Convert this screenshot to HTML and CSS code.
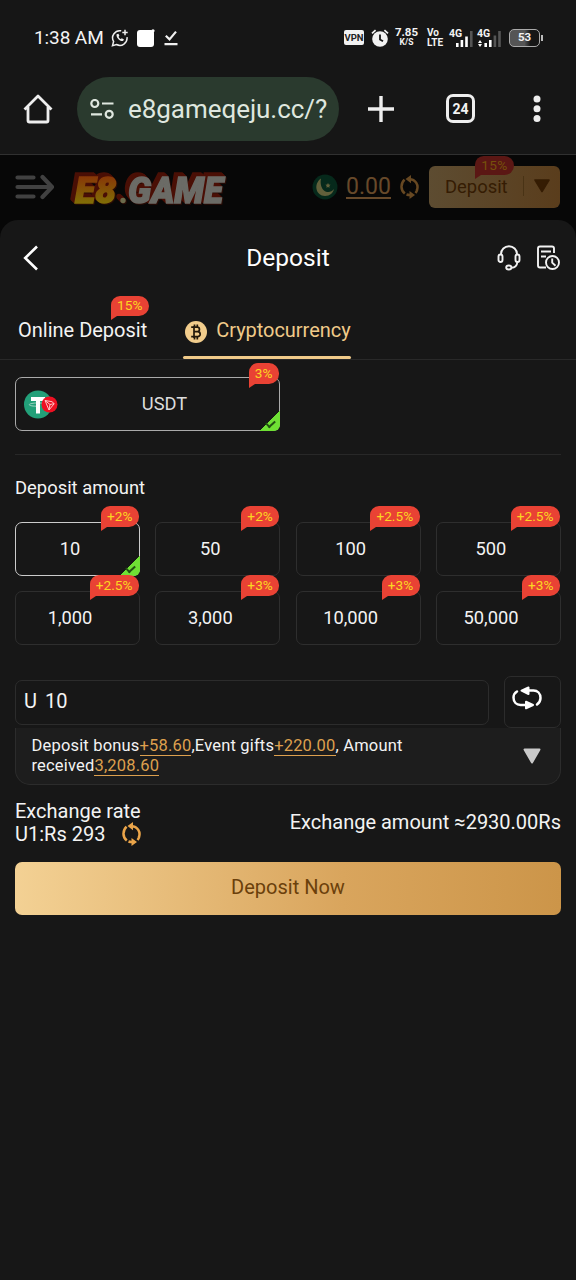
FILE: index.html
```html
<!DOCTYPE html>
<html lang="en">
<head>
<meta charset="utf-8">
<title>Deposit</title>
<link rel="stylesheet" href="styles.css">
</head>
<body>
<div class="status">
  <span class="clock">1:38 AM</span>
  <svg class="st-wa" width="18" height="18" viewBox="0 0 18 18" fill="none" stroke="#eee" stroke-width="1.5"><path d="M10.2 1.8A7.2 7.2 0 0 0 2.6 12.5L1.5 16.6l4-1.1A7.2 7.2 0 0 0 16 8.2"/><path d="M14 .8v5.4M11.3 3.5h5.4"/><path d="M5.6 5.2c-.8 3 3.2 7.4 6.4 6.8l1-1.6-2.2-1.2-1 .9c-1-.4-1.8-1.3-2.2-2.3l.8-1-1-2z" fill="#eee" stroke="none"/></svg>
  <svg class="st-sq" width="18" height="18" viewBox="0 0 18 18"><rect x="0" y="1" width="17" height="17" rx="3" fill="#fff"/><circle cx="16" cy="1.8" r="1.6" fill="#fff"/></svg>
  <svg class="st-chk" width="14" height="16" viewBox="0 0 14 16" fill="none" stroke="#f0f0f0" stroke-width="2.2"><path d="M1.8 5.8l3.7 3.6L12 1.6M.5 14.2h13"/></svg>
  <span class="grow"></span>
  <span class="vpn">VPN</span>
  <svg class="st-alarm" width="18" height="18" viewBox="0 0 18 18"><circle cx="9" cy="10" r="7.8" fill="#f2f2f2"/><path d="M1 4.400L4.600 1.200M17 4.400L13.400 1.200" stroke="#f2f2f2" stroke-width="1.800"/><path d="M9 5.600v4.800l3 1.800" fill="none" stroke="#161616" stroke-width="1.800"/></svg>
  <span class="stack speed"><b>7.85</b><i>K/S</i></span>
  <span class="stack volte"><b>Vo</b><b>LTE</b></span>
  <span class="signal"><b>4G</b><svg width="17" height="16" viewBox="0 0 17 16"><path d="M0 12h2.600v4H0zM4.600 9h2.600v7H4.600zM9.200 5.500h2.600v10.500H9.200z" fill="#fff"/><path d="M14 0h2.600v16H14z" fill="#555"/></svg></span>
  <span class="signal second"><b>4G</b><svg width="23" height="16" viewBox="0 0 23 16"><path d="M0 12L2 9l2 3zM0 13l2 3 2-3zM6.400 12H9v4H6.400zM11 9h2.600v7H11z" fill="#fff"/><path d="M15.600 4.500h2.600V16h-2.600zM20.200 0h2.600v16h-2.600z" fill="#555"/></svg></span>
  <span class="battery">53</span>
</div>
<div class="browser">
  <svg class="home" width="30" height="30" viewBox="0 0 30 30" fill="none" stroke="#eee" stroke-width="2.800" stroke-linejoin="round"><path d="M1.500 15.500L15 2l13.500 13.500M5 13v13.500q0 1.500 1.500 1.500h17q1.500 0 1.500-1.500V13"/></svg>
  <div class="url">
    <svg width="25" height="20" viewBox="0 0 25 20" fill="none" stroke="#dfe7df" stroke-width="2.200"><circle cx="4.800" cy="4.500" r="3.500"/><path d="M12 4.500h11.500M1 15.300h11"/><circle cx="19.200" cy="15.300" r="3.500"/></svg>
    <span>e8gameqeju.cc/?</span>
  </div>
  <svg class="plus" width="26" height="26" viewBox="0 0 26 26" stroke="#eee" stroke-width="3.400"><path d="M13 0v26M0 13h26"/></svg>
  <span class="tabcount">24</span>
  <svg class="dots" width="8" height="28" viewBox="0 0 8 28" fill="#eee"><circle cx="4" cy="4" r="3.500"/><circle cx="4" cy="13.800" r="3.500"/><circle cx="4" cy="23.600" r="3.500"/></svg>
</div>
<header class="site">
  <svg class="menu" width="39" height="26" viewBox="0 0 39 26" fill="none" stroke="#414141" stroke-width="4.200" stroke-linecap="round" stroke-linejoin="round"><path d="M2.500 3.500h16M2.500 13h34M2.500 22.500h16M27.500 3l9.500 10-9.500 10"/></svg>
  <svg class="logo" width="160" height="38" viewBox="0 0 160 38">
    <defs><linearGradient id="fire" x1="0" y1="0" x2="0" y2="1"><stop offset=".2" stop-color="#873807"/><stop offset=".85" stop-color="#807106"/></linearGradient></defs>
    <text class="logo-e8" x="7" y="34.500" textLength="41" lengthAdjust="spacingAndGlyphs">E8</text><circle cx="55" cy="32.500" r="2.700" fill="#6b6b4c"/><text class="logo-game" x="60" y="34.500" textLength="95" lengthAdjust="spacingAndGlyphs">GAME</text>
  </svg>
  <span class="grow"></span>
  <svg class="flag" width="26" height="26" viewBox="0 0 26 26"><circle cx="13" cy="13" r="12.500" fill="#06291b"/><path d="M9 4.500C1 10 4 22 13 22c5 0 8-3 9-7-2.500 3.500-7 4-10 1.500S8 9 9 4.500z" fill="#62603b"/><path d="M16 9l.8 1.600 1.800.2-1.300 1.200.3 1.800-1.600-.8-1.600.8.3-1.800-1.300-1.200 1.800-.2z" fill="#62603b"/></svg>
  <span class="balance">0.00</span>
  <svg class="sync" width="20" height="24" viewBox="0 0 20 24"><use href="#sync-shape" color="#674822"/></svg>
  <div class="mini-deposit"><span>Deposit</span><i></i><svg width="18" height="14" viewBox="0 0 18 14"><path d="M2 1h14L9 12.500z" fill="#351c03" stroke="#351c03" stroke-width="1.600" stroke-linejoin="round"/></svg><em class="badge dim">15%</em></div>
</header>
<main class="sheet">
  <div class="sheet-head">
    <svg width="16" height="26" viewBox="0 0 16 26" fill="none" stroke="#fff" stroke-width="2.600"><path d="M15 1.500L3.200 13 15 24.500"/></svg>
    <h1>Deposit</h1>
    <div class="head-icons">
      <svg width="24" height="26" viewBox="0 0 24 26" fill="none" stroke="#f2f2f2" stroke-width="1.900"><path d="M4 10V9a8 7.800 0 0 1 16 0v1M20.500 16.500c-.5 4.500-3 6.300-6 6.300"/><rect x="1.500" y="9.500" width="4" height="7.500" rx="2"/><rect x="18.500" y="9.500" width="4" height="7.500" rx="2"/><ellipse cx="11.800" cy="22.500" rx="2.600" ry="2"/></svg>
      <svg width="24" height="26" viewBox="0 0 24 26" fill="none" stroke="#f2f2f2" stroke-width="1.900"><path d="M18 8V3.500Q18 1.500 16 1.500H4Q2 1.500 2 3.500v17q0 2 2 2h6M5 6.500h10M5 11.500h5"/><circle cx="16.500" cy="17.500" r="6.500"/><path d="M16.200 13.500v4.200l3.300 3"/></svg>
    </div>
  </div>
  <nav class="tabs">
    <a class="tab">Online Deposit<em class="badge">15%</em></a>
    <a class="tab active"><svg width="22" height="22" viewBox="0 0 22 22"><circle cx="11" cy="11" r="11" fill="#f2cd8c"/><path d="M9 5v12M9 6.200h3.200a2.200 2.200 0 0 1 0 4.500H9h3.700a2.500 2.500 0 0 1 0 5H9M6.200 6.200H9M6.200 15.700H9M9.500 3.500v3M12.300 3.500v3M9.500 15.500v3M12.300 15.500v3" fill="none" stroke="#22180b" stroke-width="1.700"/></svg><span>Cryptocurrency</span></a>
  </nav>
  <section class="body">
    <div class="coin selected">
      <svg width="36" height="30" viewBox="0 0 36 30"><circle cx="14" cy="15.500" r="14" fill="#22a079"/><path d="M7 8h14v4h-5v12.500h-4V12H7z" fill="#fff"/><path d="M12 14c-9 .5-9 3 0 3.200M16 14c2 .1 3.500.4 4.500.8" fill="none" stroke="#9fd5c4" stroke-width="1"/><circle cx="25.500" cy="15.500" r="8" fill="#ed1022"/><path d="M21 11.500l7 1.200 2.200 2-5.200 6.300zM21 11.500l5 4-1 5.500M26 15.500l4.200-.8" fill="none" stroke="#ffc4c4" stroke-width="1"/></svg>
      <span>USDT</span>
      <em class="badge">3%</em>
    </div>
    <h2>Deposit amount</h2>
    <div class="amounts">
      <div class="amount selected">10<em class="badge">+2%</em></div>
      <div class="amount">50<em class="badge">+2%</em></div>
      <div class="amount">100<em class="badge">+2.5%</em></div>
      <div class="amount">500<em class="badge">+2.5%</em></div>
      <div class="amount">1,000<em class="badge">+2.5%</em></div>
      <div class="amount">3,000<em class="badge">+3%</em></div>
      <div class="amount">10,000<em class="badge">+3%</em></div>
      <div class="amount">50,000<em class="badge">+3%</em></div>
    </div>
    <div class="entry">
      <div class="field"><span>U</span><span>10</span></div>
      <div class="swap"><svg width="30" height="26" viewBox="0 0 30 26"><path d="M5 5.500C2.500 7 1.500 9 1.500 11.500c0 4.500 3 7.500 7 7.500h6M25 18.500c2-1.500 3.500-4 3.500-6.500 0-4.500-3-7.500-7-7.500H15" fill="none" stroke="#fff" stroke-width="2.500" stroke-linecap="round"/><path d="M16.500 1.500v6.500L9.500 4.700zM14 15.700l7 3.300-7 3.300z" fill="#fff" stroke="#fff" stroke-width="2" stroke-linejoin="round"/></svg></div>
    </div>
    <div class="bonus">
      <p>Deposit bonus<u>+58.60</u>,Event gifts<u>+220.00</u>, Amount<br>received<u>3,208.60</u></p>
      <svg width="18" height="16" viewBox="0 0 18 16"><path d="M1.500 1.500h15L9 14.500z" fill="#c9c9c9" stroke="#c9c9c9" stroke-width="2" stroke-linejoin="round"/></svg>
    </div>
    <div class="exchange">
      <div>Exchange rate<br>U1:Rs 293 <svg class="rate-sync" width="20" height="24" viewBox="0 0 20 24"><defs><g id="sync-shape"><path d="M4.500 4.700C.3 9 .5 15 4.800 18.500M9.500 4.200c6 0 9.700 6 7.200 11.300M15.500 18q1.300-1.500 1.800-3.500M6.500 19.500q2 .7 4.500.5" fill="none" stroke="currentColor" stroke-width="2.500"/><path d="M11 0v8.200L5.500 4.100zM9.500 16v8l5.500-4z" fill="currentColor"/></g></defs><use href="#sync-shape" color="#eba54a"/></svg></div>
      <div>Exchange amount ≈2930.00Rs</div>
    </div>
    <div class="submit">Deposit Now</div>
  </section>
</main>
</body>
</html>
```
FILE: styles.css
```css
* { box-sizing: border-box; }
body { margin: 0; width: 576px; height: 1280px; overflow: hidden; background: #070707; color: #f3f3f3; font-family: Roboto, "Liberation Sans", sans-serif; }
svg { display: block; flex: none; }
em, i { font-style: normal; }
.grow { flex: 1; }

/* phone status bar */
.status { height: 70px; padding: 5px 36px 0 34px; display: flex; align-items: center; background: #161616; }
.clock { width: 69px; font-size: 19px; line-height: 22px; white-space: nowrap; letter-spacing: -.1px; }
.st-wa { margin-left: 8px; }
.st-sq { margin-left: 8px; }
.st-chk { margin: 1px 0 0 9px; }
.vpn { width: 20px; height: 15px; border-radius: 2px; background: #f2f2f2; color: #222; font-size: 9.500px; line-height: 16px; font-weight: 700; text-align: center; }
.st-alarm { margin-left: 7px; }
.stack { display: flex; flex-direction: column; align-items: center; }
.speed { width: 23px; margin-left: 6px; margin-top: -2px; }
.speed b { font-size: 11.500px; line-height: 11px; font-weight: 700; }
.speed i { font-size: 8.500px; line-height: 9px; font-weight: 700; }
.volte { width: 17px; margin-left: 9px; align-items: flex-start; }
.volte b { font-size: 10px; line-height: 9.500px; font-weight: 700; }
.signal { width: 24px; height: 18px; margin-left: 5px; position: relative; display: flex; align-items: flex-end; justify-content: flex-end; }
.signal b { position: absolute; left: 0; top: 0; font-size: 10.500px; line-height: 10px; }
.second { margin-left: 4px; }
.battery { position: relative; width: 31px; height: 18px; margin-left: 8px; border: 1.500px solid #aaa; border-radius: 5px; background: linear-gradient(90deg, #555 50%, #161616 70%); font-size: 11.500px; line-height: 15.500px; font-weight: 700; text-align: center; }
.battery::after { content: ""; position: absolute; right: -4px; top: 5px; width: 2px; height: 6px; background: #bbb; }

/* browser toolbar */
.browser { height: 85px; padding: 0 35px 7px 23px; display: flex; align-items: center; background: #161616; border-bottom: 1px solid #303030; }
.url { width: 262px; height: 64px; margin-left: 24px; padding-left: 13px; border-radius: 32px; display: flex; align-items: center; gap: 13px; background: #2a3a2e; color: #dfe7df; font-size: 26px; letter-spacing: -.05px; white-space: nowrap; }
.plus { margin-left: 29px; }
.tabcount { width: 29px; height: 29px; margin-left: 52px; border: 3px solid #eee; border-radius: 7px; font-size: 14px; line-height: 24px; font-weight: 700; text-align: center; }
.dots { margin-left: auto; }

/* dimmed page header */
.site { height: 65px; padding: 0 16px 1px 15px; display: flex; align-items: center; }
.logo { margin: 0 0 0 14px; font: italic 900 37px Roboto, "Liberation Sans", sans-serif; overflow: visible; filter: drop-shadow(-1px -1px 0 #4a0f05) drop-shadow(-1px -1px 0 #4a0f05) drop-shadow(-2px -2px 0 #4a0f05) drop-shadow(1px 1px 0 #2b0c05); }
.logo-e8 { fill: url(#fire); stroke: url(#fire); stroke-width: 1.500px; }
.logo-game { fill: #6b6b66; stroke: #6b6b66; stroke-width: 1.500px; }
.balance { margin: 0 9px 0 8px; width: 45px; border-bottom: 2px solid #67492a; color: #67492a; font-size: 23px; line-height: 21px; text-align: center; }
.mini-deposit { position: relative; width: 131px; height: 42px; margin-left: 9px; padding: 0 9px 2px 16px; border-radius: 6px; display: flex; align-items: center; justify-content: space-between; background: linear-gradient(90deg, #5d4c31, #5a3d1c); color: #351c03; font-size: 18.400px; }
.mini-deposit i { width: 1px; height: 20px; margin-left: 6px; background: #493315; }

/* ribbon badges */
.badge { position: absolute; right: -1px; top: -16.500px; height: 20.500px; padding: 0 6.500px 0 6px; border-radius: 9px 10px 10px 0; background: #e94234; color: #fbd522; font-size: 13.700px; line-height: 20px; white-space: nowrap; }
.badge::after { content: ""; position: absolute; left: 0; top: 100%; border-top: 4.500px solid #e94234; border-right: 6px solid transparent; }
.badge.dim { right: 46px; top: -10px; height: 19px; line-height: 19px; letter-spacing: .3px; background: #5b1714; color: #75510b; }
.badge.dim::after { border-top-color: #5b1714; }

/* deposit sheet */
.sheet { height: 1060px; border-radius: 18px 18px 0 0; background: #171717; }
.sheet-head { height: 76px; padding: 0 16px 0 22px; display: grid; grid-template-columns: 1fr auto 1fr; align-items: center; }
.sheet-head h1 { margin: 0 6px 0 0; font-size: 24.500px; line-height: 30px; font-weight: 400; color: #fff; }
.head-icons { display: flex; justify-content: flex-end; gap: 15px; }
.tabs { height: 64px; padding: 0 18px; display: flex; gap: 36px; border-bottom: 1px solid #292929; font-size: 20px; }
.tab { position: relative; height: 64px; line-height: 69px; white-space: nowrap; }
.tab .badge { right: -2px; top: 0; height: 19.500px; line-height: 19.500px; letter-spacing: .1px; }
.active { display: flex; align-items: flex-start; gap: 9px; padding-left: 2px; color: #f0ca89; letter-spacing: -.04px; }
.active svg { margin-top: 25px; }
.active::after { content: ""; position: absolute; left: 0; right: 0; bottom: 1px; height: 3.500px; border-radius: 2px; background: #f0ca89; }
.body { padding: 17px 15px 0; }
.coin { position: relative; width: 265px; height: 54px; padding: 0 8px; border: 1px solid #aaa; border-radius: 7px; display: flex; align-items: center; font-size: 18.300px; }
.coin span { flex: 1; padding: 0 2px 1px 0; text-align: center; color: #ddd; }
.coin .badge { top: -15px; right: 0; }
.selected::after { content: ""; position: absolute; right: -1px; bottom: -1px; width: 21px; height: 21px; border-radius: 0 0 6px 0; background: linear-gradient(135deg, transparent 50%, #6fe034 51%); }
.selected::before { content: ""; position: absolute; z-index: 1; right: 4px; bottom: 4px; width: 7px; height: 4px; border: solid #225012; border-width: 0 0 2px 2px; transform: rotate(-43deg); }
h2 { margin: 22.500px 0 0; padding-top: 21px; border-top: 1px solid #282828; font-size: 18.400px; line-height: 24px; font-weight: 400; }
.amounts { margin-top: 22px; display: grid; grid-template-columns: repeat(4, 1fr); gap: 15px 15.300px; }
.amount { position: relative; height: 54px; padding-right: 15px; border: 1px solid #2e2e2e; border-radius: 7px; font-size: 18.300px; line-height: 52px; text-align: center; }
.amount .badge { right: 0; }
.amount.selected { border-color: #ccc; }
.entry { margin-top: 31px; display: flex; align-items: center; justify-content: space-between; }
.field { width: 474px; height: 45px; margin-bottom: -1px; padding: 0 8px; border: 1px solid #2c2c2c; border-radius: 7px; display: flex; gap: 8px; font-size: 20px; line-height: 41px; }
.swap { width: 57px; height: 52px; padding: 9px 7px; border: 1px solid #2c2c2c; border-radius: 7px; }
.bonus { height: 57px; padding: 0 19px 0 15.500px; border: 1px solid #2c2c2c; border-top: 0; border-radius: 0 0 15px 15px; display: flex; align-items: center; justify-content: space-between; background: #1d1d1d; }
.bonus p { margin: 0; font-size: 16.500px; line-height: 20px; letter-spacing: .18px; white-space: nowrap; }
.bonus u { color: #dda04e; text-decoration: none; border-bottom: 1px solid #dda04e; }
.exchange { height: 77px; padding: 15px 0 16px; display: flex; align-items: center; justify-content: space-between; font-size: 20px; line-height: 23px; white-space: nowrap; }
.rate-sync { display: inline-block; margin: -3px 0 -5px 12px; vertical-align: baseline; }
.submit { height: 53px; border-radius: 7px; background: linear-gradient(90deg, #f3d194, #d9a55d 60%, #cc9549); color: #6b400b; font-size: 20px; line-height: 51px; text-align: center; }
```
